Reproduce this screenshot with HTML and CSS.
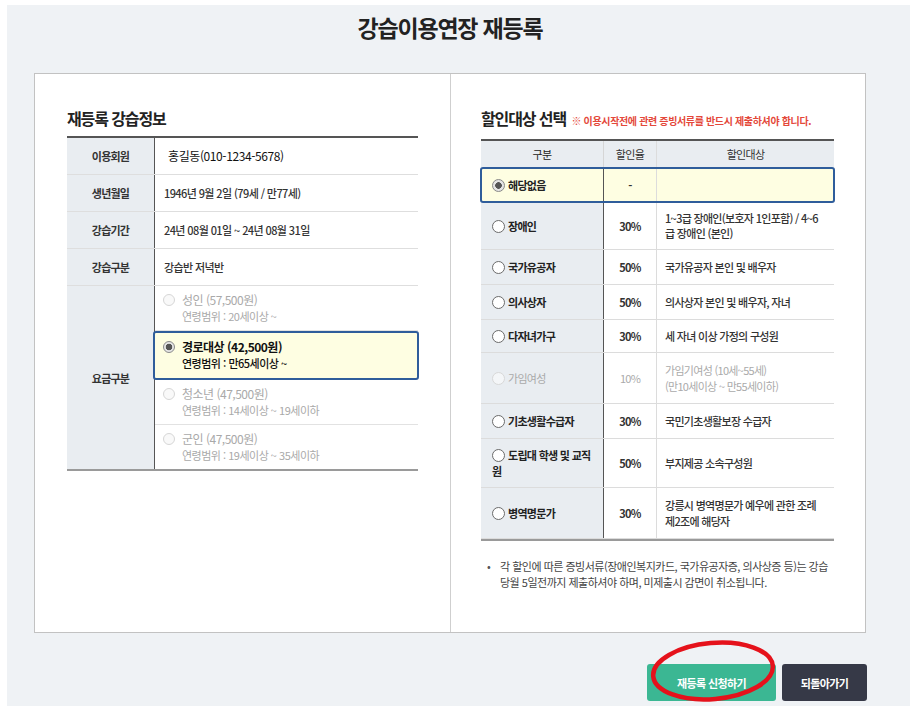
FILE: index.html
```html
<!DOCTYPE html>
<html lang="ko">
<head>
<meta charset="utf-8">
<title>강습이용연장 재등록</title>
<link rel="stylesheet" href="styles.css">
</head>
<body>
<div class="page">
  <h1 class="title">강습이용연장 재등록</h1>
  <div class="card">
    <section class="col col-left">
      <h2 class="heading">재등록 강습정보</h2>
      <div class="itable">
        <div class="irow"><div class="lab">이용회원</div><div class="val member">홍길동(010-1234-5678)</div></div>
        <div class="irow"><div class="lab">생년월일</div><div class="val">1946년 9월 2일 (79세 / 만77세)</div></div>
        <div class="irow"><div class="lab">강습기간</div><div class="val">24년 08월 01일 ~ 24년 08월 31일</div></div>
        <div class="irow"><div class="lab">강습구분</div><div class="val">강습반 저녁반</div></div>
        <div class="irow last"><div class="lab">요금구분</div>
          <div class="opts">
            <div class="fopt off"><span class="fradio"></span><div><div class="l1">성인 (57,500원)</div><div class="l2">연령범위 : 20세이상 ~</div></div></div>
            <div class="fopt sel"><span class="fradio on"></span><div><div class="l1">경로대상 (42,500원)</div><div class="l2">연령범위 : 만65세이상 ~</div></div></div>
            <div class="fopt off"><span class="fradio"></span><div><div class="l1">청소년 (47,500원)</div><div class="l2">연령범위 : 14세이상 ~ 19세이하</div></div></div>
            <div class="fopt off"><span class="fradio"></span><div><div class="l1">군인 (47,500원)</div><div class="l2">연령범위 : 19세이상 ~ 35세이하</div></div></div>
          </div>
        </div>
      </div>
    </section>
    <section class="col col-right">
      <h2 class="heading">할인대상 선택 <span class="warn">※ 이용시작전에 관련 증빙서류를 반드시 제출하셔야 합니다.</span></h2>
      <div class="dtable">
        <div class="drow head"><div class="c1">구분</div><div class="c2">할인율</div><div class="c3">할인대상</div></div>
        <div class="drow sel"><div class="c1"><span class="lbl"><span class="radio on"></span>해당없음</span></div><div class="c2">-</div><div class="c3"></div></div>
        <div class="drow short"><div class="c1"><span class="lbl"><span class="radio"></span>장애인</span></div><div class="c2">30%</div><div class="c3 tight">1~3급 장애인(보호자 1인포함) / 4~6<br>급 장애인 (본인)</div></div>
        <div class="drow"><div class="c1"><span class="lbl"><span class="radio"></span>국가유공자</span></div><div class="c2">50%</div><div class="c3">국가유공자 본인 및 배우자</div></div>
        <div class="drow"><div class="c1"><span class="lbl"><span class="radio"></span>의사상자</span></div><div class="c2">50%</div><div class="c3">의사상자 본인 및 배우자, 자녀</div></div>
        <div class="drow short"><div class="c1"><span class="lbl"><span class="radio"></span>다자녀가구</span></div><div class="c2">30%</div><div class="c3">세 자녀 이상 가정의 구성원</div></div>
        <div class="drow off"><div class="c1"><span class="lbl"><span class="radio"></span>가임여성</span></div><div class="c2">10%</div><div class="c3">가임기여성 (10세~55세)<br>(만10세이상 ~ 만55세이하)</div></div>
        <div class="drow"><div class="c1"><span class="lbl"><span class="radio"></span>기초생활수급자</span></div><div class="c2">30%</div><div class="c3">국민기초생활보장 수급자</div></div>
        <div class="drow short"><div class="c1"><span class="lbl"><span class="radio"></span>도립대 학생 및 교직<br>원</span></div><div class="c2">50%</div><div class="c3">부지제공 소속구성원</div></div>
        <div class="drow"><div class="c1"><span class="lbl"><span class="radio"></span>병역명문가</span></div><div class="c2">30%</div><div class="c3">강릉시 병역명문가 예우에 관한 조례<br>제2조에 해당자</div></div>
      </div>
      <ul class="notes">
        <li>각 할인에 따른 증빙서류(장애인복지카드, 국가유공자증, 의사상증 등)는 강습 당월 5일전까지 제출하셔야 하며, 미제출시 감면이 취소됩니다.</li>
      </ul>
    </section>
  </div>
  <div class="actions">
    <div class="btn-wrap">
      <button class="btn btn-primary" type="button">재등록 신청하기</button>
      <svg class="mark" width="130" height="70" viewBox="0 0 130 70" aria-hidden="true">
        <ellipse cx="65" cy="35" rx="60" ry="28" transform="rotate(-5 65 35)" fill="none" stroke="#e5121b" stroke-width="4.5"/>
      </svg>
    </div>
    <button class="btn btn-dark" type="button">되돌아가기</button>
  </div>
</div>
</body>
</html>
```

FILE: styles.css
```css
* { box-sizing: border-box; }
html, body { margin: 0; padding: 0; background: #ffffff; }
body {
  font-family: "Noto Sans CJK KR", "Noto Sans", sans-serif;
  color: #333;
  font-size: 11px;
}
.page {
  margin: 5px 0 0 7px;
  width: 903px;
  height: 701px;
  background: #eff2f5;
  padding: 7px 0 0 27px;
}
.title {
  margin: 0 0 31px;
  width: 832px;
  text-align: center;
  font-size: 23px;
  line-height: 30px;
  font-weight: 700;
  letter-spacing: -1.2px;
  color: #222;
}
.card {
  width: 832px;
  height: 560px;
  background: #fff;
  border: 1px solid #c2c2c2;
  display: grid;
  grid-template-columns: 416px 1fr;
}
.col { padding-top: 33px; }
.col-left { border-right: 1px solid #cfcfcf; padding-left: 32px; }
.col-right { padding-left: 30px; }
.heading {
  margin: 0 0 7px;
  font-size: 16px;
  line-height: 22px;
  font-weight: 700;
  letter-spacing: -1.1px;
  color: #222;
  white-space: nowrap;
}
.warn {
  font-size: 10px;
  font-weight: 700;
  letter-spacing: -0.35px;
  color: #e4483a;
  margin-left: 2px;
}

/* left info table */
.itable {
  width: 351px;
  border-top: 2px solid #555;
  border-bottom: 2px solid #9a9a9a;
}
.irow {
  display: grid;
  grid-template-columns: 88px 1fr;
  border-bottom: 1px solid #dedede;
}
.irow.last { border-bottom: 0; }
.lab {
  background: #e9edf1;
  border-right: 1px solid #555;
  display: flex;
  align-items: center;
  justify-content: center;
  font-weight: 700;
  letter-spacing: -0.8px;
  color: #333;
  padding: 10px 0;
  line-height: 16px;
}
.val {
  padding: 10px 9px;
  line-height: 16px;
  font-weight: 500;
  letter-spacing: -0.6px;
  color: #333;
}
.val.member {
  padding-left: 13px;
  font-size: 12px;
  font-weight: 400;
  letter-spacing: -0.4px;
  color: #111;
}
.opts { display: flex; flex-direction: column; }
.fopt {
  display: flex;
  align-items: flex-start;
  gap: 7px;
  padding: 6px 0 6px 8px;
  line-height: 16px;
  border-bottom: 1px solid #e2e2e2;
  letter-spacing: -0.5px;
}
.fopt:last-child { border-bottom: 0; }
.fopt .l1 { font-size: 12px; }
.fopt .l2 { font-size: 11px; }
.fopt.off { color: #a9a9a9; }
.fopt.sel {
  background: #fefee2;
  border: 2px solid #2f5d9b;
  border-radius: 3px;
  margin: 0 -1px 0 -2px;
  padding: 6px 0 7px 8px;
  color: #111;
}
.fopt.sel .l1 { font-weight: 700; }
.fopt.sel .l2 { font-weight: 500; }
.fradio {
  flex: none;
  width: 12px;
  height: 12px;
  margin-top: 2px;
  border-radius: 50%;
  border: 1px solid #d6d6d6;
  background: #f9f9f9;
}
.fradio.on {
  border-color: #8a8a8a;
  background: radial-gradient(circle, #555 0 3px, #e6e6e6 3.6px);
}

/* right discount table */
.dtable {
  width: 353px;
  border-top: 2px solid #555;
  border-bottom: 2px solid #9a9a9a;
}
.drow {
  display: grid;
  grid-template-columns: 123px 53px 1fr;
  border-bottom: 1px solid #dcdcdc;
  font-weight: 700;
  letter-spacing: -0.7px;
  color: #333;
}
.drow > div {
  display: flex;
  align-items: center;
  padding-top: 9px;
  padding-bottom: 9px;
  line-height: 16px;
}
.drow.short > div { padding-top: 8px; padding-bottom: 8px; }
.drow .c1 {
  background: #e9edf1;
  border-right: 1px solid #555;
  padding-left: 11px;
  color: #222;
}
.drow .c2 {
  justify-content: center;
  border-right: 1px solid #dcdcdc;
}
.drow .c3 { padding-left: 8px; font-weight: 500; }
.drow .c3.tight { line-height: 15px; }
.drow.head {
  background: #e9edf1;
  border-bottom: 0;
  font-weight: 400;
}
.drow.head > div { padding-top: 5px; padding-bottom: 5px; justify-content: center; }
.drow.head .c1 { border-right-color: #d6d6d6; padding-left: 0; }
.drow.head .c3 { padding-left: 0; font-weight: 400; }
.drow.sel {
  background: #fefee2;
  border: 2px solid #2f5d9b;
  border-radius: 3px;
  margin: 0 -1px;
  grid-template-columns: 122px 53px 1fr;
}
.drow.sel > div { padding-top: 8px; padding-bottom: 8px; }
.drow.sel .c1 { background: transparent; padding-left: 10px; }
.drow.off { color: #aaa; font-weight: 400; }
.drow.off .c1 { color: #aaa; }
.drow.off .c3 { font-weight: 400; }
.lbl { display: block; }
.radio {
  display: inline-block;
  vertical-align: -2px;
  width: 13px;
  height: 13px;
  margin-right: 3px;
  border-radius: 50%;
  border: 1px solid #6b6b6b;
  background: #fff;
}
.radio.on {
  border-color: #888;
  background: radial-gradient(circle, #555 0 3px, #e4e4e4 3.6px);
}
.drow.off .radio { border-color: #d8d8d8; background: #f4f6f8; }

.notes {
  margin: 17px 0 0;
  padding: 0 0 0 19px;
  width: 353px;
  list-style: none;
  color: #444;
  line-height: 16px;
  letter-spacing: -0.5px;
}
.notes li { position: relative; }
.notes li::before {
  content: "•";
  position: absolute;
  left: -13px;
  top: 0;
  color: #555;
}

/* buttons */
.actions {
  width: 833px;
  margin-top: 31px;
  display: flex;
  justify-content: flex-end;
  gap: 6px;
}
.btn-wrap { position: relative; }
.btn {
  height: 37px;
  border: 0;
  border-radius: 3px;
  color: #fff;
  font-family: "Noto Sans CJK KR", sans-serif;
  font-size: 11px;
  font-weight: 700;
  letter-spacing: -0.6px;
  cursor: pointer;
  display: block;
}
.btn-primary { width: 129px; background: #3bb793; }
.btn-dark { width: 85px; background: #363947; }
.mark {
  position: absolute;
  left: 1px;
  top: -28px;
  pointer-events: none;
}
```
